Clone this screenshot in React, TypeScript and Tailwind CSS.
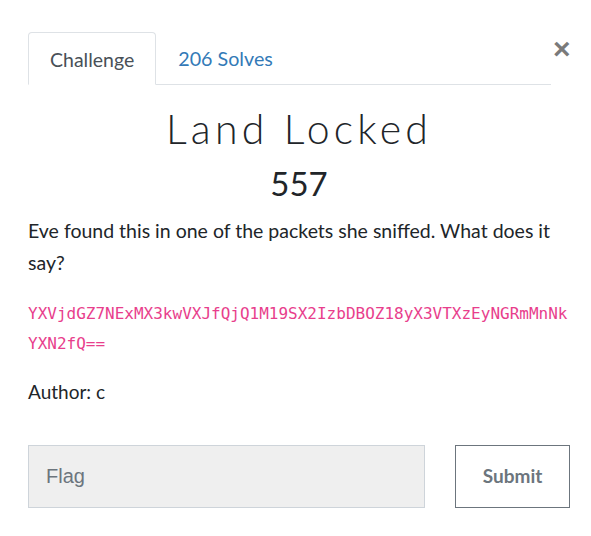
import React from "react";

const code = "YXVjdGZ7NExMX3kwVXJfQjQ1M19SX2IzbDBOZ18yX3VTXzEyNGRmMnNkYXN2fQ==";

export default function App() {
    return (
        <div className="w-[591px] h-[536px] bg-white pl-[28px] pr-[21px] pt-[32px] font-['Lato','Liberation_Sans',sans-serif] text-[#212529]">
            <div className="flex items-start">
                <ul className="flex flex-1 border-b border-[#dee2e6] h-[53px]">
                    <li className="-mb-px h-[53px] px-[21px] pt-[2px] flex items-center border border-[#dee2e6] border-b-white bg-white rounded-t-[4px] text-[19.5px] text-[#495057]">
                        Challenge
                    </li>
                    <li className="h-[52px] px-[22px] pt-[2px] flex items-center text-[19.7px] text-[#337ab7]">
                        206 Solves
                    </li>
                </ul>
                <button className="w-[17px] ml-[2px] mt-[4px] text-[30px] leading-[26px] font-bold text-[#7a7a7a] font-['Liberation_Sans',sans-serif]">
                    ×
                </button>
            </div>

            <h3 className="mt-[18px] text-center text-[41px] leading-[52px] font-light tracking-[4.2px] text-[#212529]">
                Land Locked
            </h3>
            <h4 className="mt-[8px] text-center text-[33px] leading-[40px] text-[#212529]">557</h4>

            <p className="mt-[12px] text-[19.5px] leading-[32px]">
                Eve found this in one of the packets she sniffed. What does it say?
            </p>
            <p className="mt-[20px] text-[16px] leading-[30px] text-[#e83e8c] break-all font-['DejaVu_Sans_Mono',monospace]">
                {code}
            </p>
            <p className="mt-[17px] text-[19px] leading-[32px]">Author: c</p>

            <form className="mt-[37px] flex items-stretch gap-[30px]" onSubmit={(e) => e.preventDefault()}>
                <input
                    type="text"
                    placeholder="Flag"
                    className="w-[397px] h-[63px] px-[17px] bg-[#efefef] border border-[#ced4da] text-[20px] font-['Liberation_Sans',sans-serif] placeholder:text-[#6c757d] outline-none"
                />
                <button
                    type="submit"
                    className="w-[115px] h-[63px] border border-[#6c757d] text-[#6c757d] text-[19px] font-bold"
                >
                    Submit
                </button>
            </form>
        </div>
    );
}
